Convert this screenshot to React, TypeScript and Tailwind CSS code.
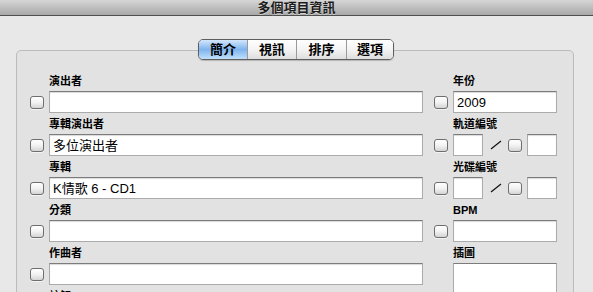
import React from "react";

const FONT = "font-['Liberation_Sans','Noto_Sans_CJK_TC',sans-serif]";

function Check() {
  return (
    <div className="w-[14px] h-[13px] shrink-0 rounded-[3px] border border-[#6e6e6e] bg-gradient-to-b from-white via-[#f2f2f2] to-[#d4d4d4] shadow-[0_1px_0_rgba(255,255,255,0.6)]" />
  );
}

function Field({ value, w }: { value?: string; w: string }) {
  return (
    <div
      className={`${w} h-[22px] shrink-0 bg-white border border-[#ababab] border-t-[#7c7c7c] shadow-[inset_0_1px_1px_rgba(0,0,0,0.15)] flex items-center pl-[3px] text-[13px] leading-none text-black`}
    >
      {value}
    </div>
  );
}

function Label({ text }: { text: string }) {
  return (
    <div className="h-[14px] mb-[3px] pl-[19px] text-[11px] leading-[14px] font-bold text-black whitespace-nowrap">
      {text}
    </div>
  );
}

function Row({ label, value, w }: { label: string; value?: string; w: string }) {
  return (
    <div className="mb-[4px]">
      <Label text={label} />
      <div className="flex items-center gap-[5px]">
        <Check />
        <Field value={value} w={w} />
      </div>
    </div>
  );
}

function NumRow({ label }: { label: string }) {
  return (
    <div className="mb-[4px]">
      <Label text={label} />
      <div className="flex items-center">
        <Check />
        <div className="w-[5px]" />
        <Field w="w-[30px]" />
        <div className="w-[25px] h-[22px] flex items-center justify-center">
          <svg width="12" height="10" viewBox="0 0 12 10">
            <line x1="1" y1="9" x2="11" y2="1" stroke="#111" strokeWidth="1.2" />
          </svg>
        </div>
        <Check />
        <div className="w-[5px]" />
        <Field w="w-[30px]" />
      </div>
    </div>
  );
}

export default function App() {
  const tabs = [
    { t: "簡介", w: "w-[48px]", sel: true },
    { t: "視訊", w: "w-[49px]" },
    { t: "排序", w: "w-[50px]" },
    { t: "選項", w: "w-[47px]" },
  ];
  return (
    <div className={`w-[593px] h-[292px] overflow-hidden bg-[#e8e8e8] ${FONT}`}>
      <div className="h-[16px] bg-gradient-to-b from-[#d6d6d6] to-[#a8a8a8] border-b border-[#4f4f4f] flex items-center justify-center">
        <span className="text-[13px] leading-none font-bold text-[#1c1c1c] [text-shadow:0_1px_0_rgba(255,255,255,0.5)]">
          多個項目資訊
        </span>
      </div>
      <div className="pt-[23px] pl-[16px] pr-[19px]">
        <div className="relative z-10 flex justify-center pl-[2px]">
          <div className="flex h-[21px] rounded-[5px] border border-[#5e5e5e] overflow-hidden shadow-[0_1px_1px_rgba(0,0,0,0.2)]">
            {tabs.map((tab, i) => (
              <div
                key={tab.t}
                className={`${tab.w} flex items-center justify-center text-[13px] leading-none font-bold text-black ${
                  i > 0 ? "border-l border-[#9a9a9a]" : ""
                } ${
                  tab.sel
                    ? "bg-gradient-to-b from-[#d4e7fb] via-[#7fb4ee] to-[#bfe0fb]"
                    : "bg-gradient-to-b from-white via-[#f4f4f4] to-[#dedede]"
                }`}
              >
                {tab.t}
              </div>
            ))}
          </div>
        </div>
        <div className="-mt-[10px] h-[260px] rounded-t-[5px] border border-[#bcbcbc] bg-[#e2e2e2] pt-[23px] pl-[13px] flex gap-[11px]">
          <div className="w-[393px]">
            <Row label="演出者" w="w-[374px]" />
            <Row label="專輯演出者" value="多位演出者" w="w-[374px]" />
            <Row label="專輯" value="K情歌 6 - CD1" w="w-[374px]" />
            <Row label="分類" w="w-[374px]" />
            <Row label="作曲者" w="w-[374px]" />
            <Label text="註解" />
          </div>
          <div className="w-[123px]">
            <Row label="年份" value="2009" w="w-[104px]" />
            <NumRow label="軌道編號" />
            <NumRow label="光碟編號" />
            <Row label="BPM" w="w-[104px]" />
            <div>
              <Label text="插圖" />
              <div className="pl-[19px]">
                <div className="w-[104px] h-[120px] bg-white border border-[#ababab] border-t-[#7c7c7c]" />
              </div>
            </div>
          </div>
        </div>
      </div>
    </div>
  );
}
